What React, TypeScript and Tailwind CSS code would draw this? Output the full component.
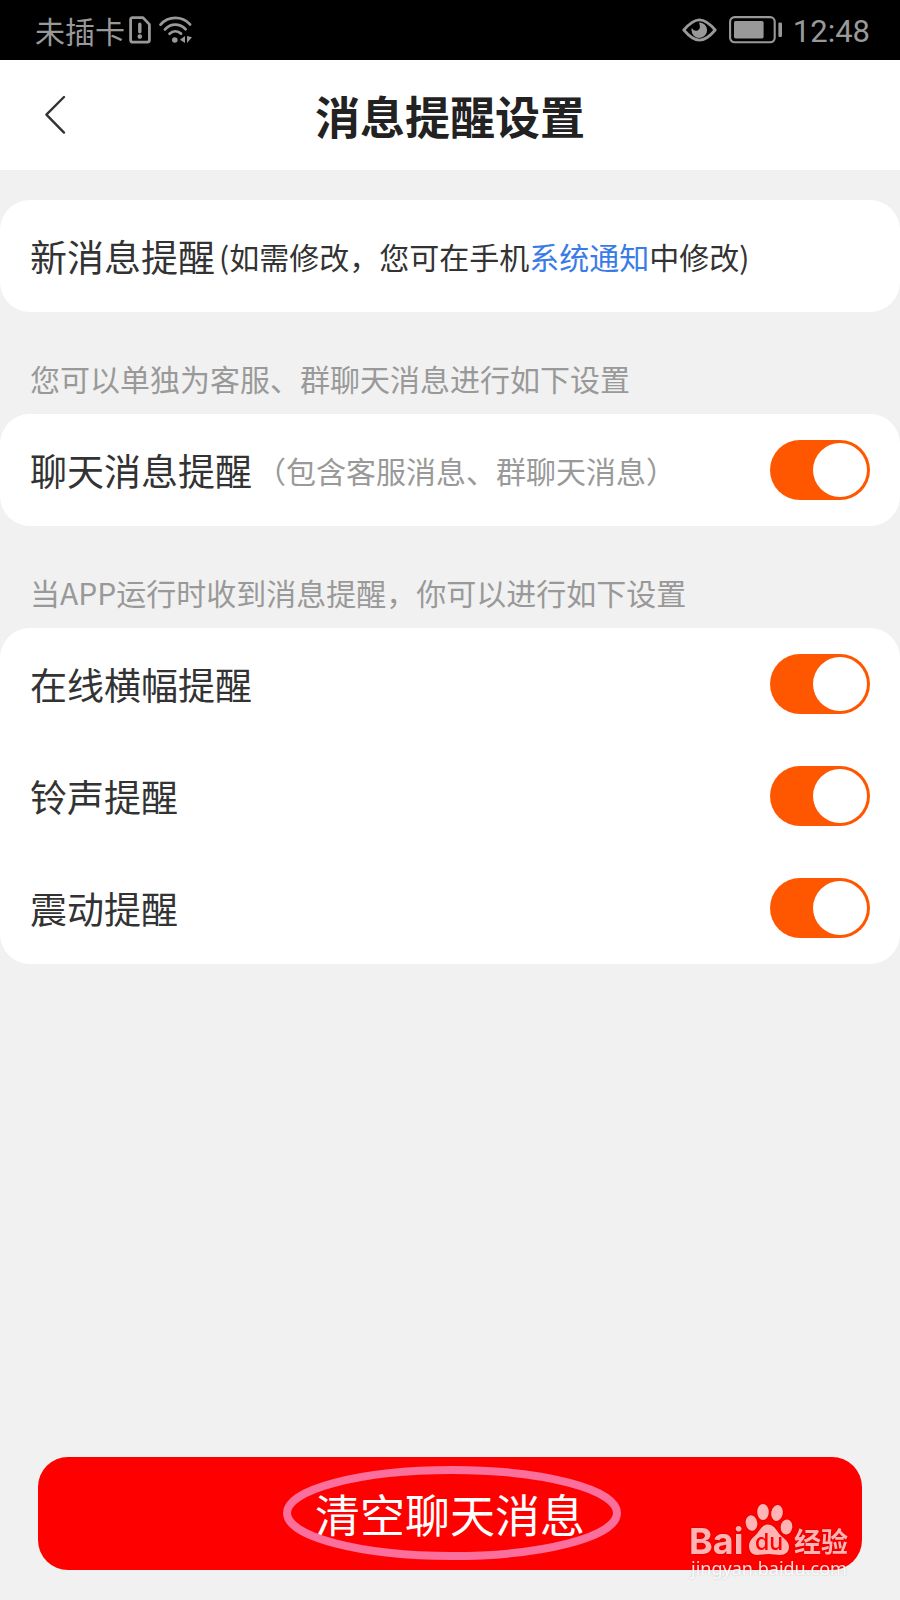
import { useState } from "react";
import type { ReactNode } from "react";

function SimAlertIcon() {
  return (
    <svg width="22" height="28" viewBox="0 0 22 28" fill="none" stroke="#999999" strokeWidth="2.8" strokeLinejoin="round" aria-hidden="true">
      <path d="M3.5 1.6H14L20.4 8.4V24Q20.4 26.2 18.2 26.2H3.8Q1.6 26.2 1.6 24V3.6Q1.6 1.6 3.5 1.6Z" />
      <path d="M10.8 8.2V15.8" strokeWidth="3.4" strokeLinecap="round" />
      <circle cx="10.8" cy="20.6" r="2.3" fill="#999999" stroke="none" />
    </svg>
  );
}

function WifiIcon() {
  return (
    <svg width="34" height="28" viewBox="0 0 34 28" fill="none" stroke="#999999" strokeWidth="2.8" strokeLinecap="round" aria-hidden="true">
      <path d="M1.6 8.6C9.5 -.2 23 -.2 31 8.4" />
      <path d="M6 13.4C11.8 7.2 20.6 7.2 26.6 13.2" />
      <path d="M10.6 17.8C14 14.6 18.6 14.6 22 17.6" />
      <circle cx="15.8" cy="24" r="2.8" fill="#999999" stroke="none" />
      <path d="M26 20V27L21 23.8ZM28 20L33 21.2L28 27Z" fill="#999999" stroke="none" />
    </svg>
  );
}

function EyeIcon() {
  return (
    <svg width="35" height="24" viewBox="0 0 35 24" aria-hidden="true">
      <path d="M1.8 12C8.6 4 13 1.8 17.5 1.8S26.4 4 33.2 12C26.4 20 22 22.2 17.5 22.2S8.6 20 1.8 12Z" fill="none" stroke="#999999" strokeWidth="2.8" strokeLinejoin="round" />
      <path d="M17 4.4A7.8 7.8 0 1 1 9.5 12.2Q9.4 11.2 9.8 10Q12 13.8 15.6 12.4Q19.4 10.6 17 4.4Z" fill="#999999" />
    </svg>
  );
}

function BatteryIcon() {
  return (
    <svg width="54" height="28" viewBox="0 0 54 28" aria-hidden="true">
      <rect x="1.1" y="1.1" width="44.6" height="25.2" rx="4.5" fill="none" stroke="#999999" strokeWidth="2.1" />
      <rect x="5" y="5" width="29.6" height="17.4" rx="1.6" fill="#999999" />
      <rect x="49.4" y="6.6" width="3.6" height="14.4" rx="1.2" fill="#999999" />
    </svg>
  );
}

function StatusBar() {
  return (
    <div className="flex h-[60px] items-center justify-between bg-black pr-[30px] pl-[35px] text-[#999999]">
      <div className="flex items-center">
        <span className="text-[30px] leading-[44px]">未插卡</span>
        <span className="ml-1"><SimAlertIcon /></span>
        <span className="ml-2"><WifiIcon /></span>
      </div>
      <div className="flex items-center">
        <EyeIcon />
        <span className="ml-3"><BatteryIcon /></span>
        <span className="ml-[10px] pt-1 font-[Roboto,sans-serif] text-[31px] leading-[40px]">12:48</span>
      </div>
    </div>
  );
}

type ToggleRowProps = { id: string; label: string; note?: string };

function ToggleRow({ id, label, note }: ToggleRowProps) {
  const [on, setOn] = useState(true);
  return (
    <div className="flex h-28 items-center justify-between px-[30px]">
      <label htmlFor={id} className="flex items-center whitespace-nowrap">
        <span className="text-[37px] leading-[56px]">{label}</span>
        {note && <span className="ml-1 text-[30px] leading-[44px] text-[#999999]">{note}</span>}
      </label>
      <input
        id={id}
        type="checkbox"
        role="switch"
        checked={on}
        onChange={(e) => setOn(e.target.checked)}
        className="flex h-[60px] w-[100px] shrink-0 cursor-pointer appearance-none items-center rounded-full bg-[#cccccc] p-[3px] before:block before:size-[54px] before:rounded-full before:bg-white checked:justify-end checked:bg-[#ff5700]"
      />
    </div>
  );
}

function Card({ children }: { children: ReactNode }) {
  return <section className="rounded-[30px] bg-white">{children}</section>;
}

function Hint({ children }: { children: ReactNode }) {
  return <p className="px-[30px] pt-11 pb-[14px] text-[30px] leading-[44px] text-[#999999]">{children}</p>;
}

function Watermark() {
  return (
    <svg className="pointer-events-none absolute right-[46px] bottom-4 drop-shadow-[0_0_1px_rgba(0,0,0,0.2)]" width="166" height="84" viewBox="0 0 166 84" aria-hidden="true">
      <g fill="#ffb3b3">
        <text x="1" y="54" fontFamily="Inter, sans-serif" fontWeight="700" fontSize="36">Bai</text>
        <ellipse cx="63.5" cy="23" rx="5.8" ry="7.8" transform="rotate(-8 63.5 23)" />
        <ellipse cx="75" cy="12" rx="5.8" ry="8" />
        <ellipse cx="89" cy="13" rx="5.8" ry="8" transform="rotate(10 89 13)" />
        <ellipse cx="98.5" cy="27" rx="5.8" ry="7.6" transform="rotate(6 98.5 27)" />
        <path d="M80 24.5C85 24.5 88 29 91 33.5C95 38 101 41 101 47C101 52 97 55 92 55C88 55 85 54 80.5 54C76 54 73 55 69 55C64 55 61 51 61 46C61 40 66 37 69.5 33C73 28.5 75 24.5 80 24.5Z" />
        <text x="106" y="52" fontFamily="'Noto Sans CJK SC', sans-serif" fontWeight="700" fontSize="27">经验</text>
      </g>
      <text x="67" y="50" fontFamily="Inter, sans-serif" fontWeight="500" fontSize="23" fill="#ff0000">du</text>
      <text x="3" y="75" fontFamily="'Noto Sans', sans-serif" fontSize="18" fill="#ffffff" fillOpacity="0.85">jingyan.baidu.com</text>
    </svg>
  );
}

export default function App() {
  return (
    <div className="relative flex min-h-screen flex-col bg-[#f1f1f1] font-['Noto_Sans_CJK_SC',sans-serif] text-[#333333]">
      <StatusBar />
      <header className="grid h-[110px] grid-cols-[110px_1fr_110px] items-center bg-white">
        <button type="button" aria-label="返回" className="flex h-full items-center pl-11">
          <svg width="22" height="40" viewBox="0 0 22 40" fill="none" stroke="#333333" strokeWidth="2.4" strokeLinecap="round" strokeLinejoin="round" aria-hidden="true">
            <path d="M20 2L2.4 19.6L20 37.6" />
          </svg>
        </button>
        <h1 className="pt-0.5 text-center text-[45px] leading-[66px] font-bold text-[#222222]">消息提醒设置</h1>
      </header>

      <main className="flex grow flex-col pt-[30px]">
        <Card>
          <p className="flex h-28 items-center px-[30px] whitespace-nowrap">
            <span className="text-[37px] leading-[56px]">新消息提醒</span>
            <span className="ml-1 text-[30px] leading-[44px]">
              (如需修改，您可在手机<a href="#notifications" className="text-[#3a7be8]">系统通知</a>中修改)
            </span>
          </p>
        </Card>

        <Hint>您可以单独为客服、群聊天消息进行如下设置</Hint>
        <Card>
          <ToggleRow id="chat" label="聊天消息提醒" note="（包含客服消息、群聊天消息）" />
        </Card>

        <Hint>当APP运行时收到消息提醒，你可以进行如下设置</Hint>
        <Card>
          <ToggleRow id="banner" label="在线横幅提醒" />
          <ToggleRow id="sound" label="铃声提醒" />
          <ToggleRow id="vibrate" label="震动提醒" />
        </Card>

        <div className="mt-auto px-[38px] pt-10 pb-[30px]">
          <button type="button" className="relative flex h-[113px] w-full items-center justify-center rounded-[30px] bg-[#ff0000] text-[45px] leading-[66px] text-white">
            清空聊天消息
            <svg className="pointer-events-none absolute" width="342" height="96" viewBox="0 0 342 96" fill="none" aria-hidden="true">
              <ellipse cx="173" cy="47" rx="165" ry="43" stroke="#fa6f9b" strokeWidth="8" />
            </svg>
          </button>
        </div>
      </main>
      <Watermark />
    </div>
  );
}
